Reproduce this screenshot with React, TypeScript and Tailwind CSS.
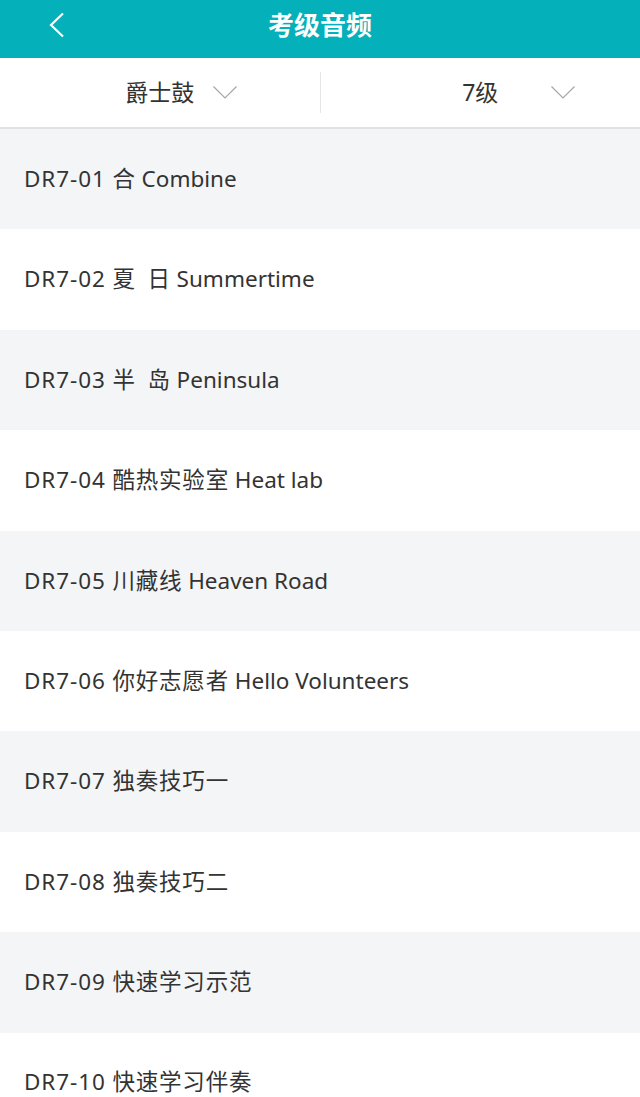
import React from 'react';

const tracks = [
  ['DR7-01', '合 Combine'],
  ['DR7-02', '夏  日 Summertime'],
  ['DR7-03', '半  岛 Peninsula'],
  ['DR7-04', '酷热实验室 Heat lab'],
  ['DR7-05', '川藏线 Heaven Road'],
  ['DR7-06', '你好志愿者 Hello Volunteers'],
  ['DR7-07', '独奏技巧一'],
  ['DR7-08', '独奏技巧二'],
  ['DR7-09', '快速学习示范'],
  ['DR7-10', '快速学习伴奏'],
];

const font = { fontFamily: '"Noto Sans", "Noto Sans CJK SC", sans-serif' };

function Chevron() {
  return (
    <svg width="24" height="13" viewBox="0 0 24 13" fill="none">
      <path d="M0.5 0.5 L12 12 L23.5 0.5" stroke="#a6a6a6" strokeWidth="1.2" />
    </svg>
  );
}

// chinese runs are set a little looser than the latin ones
function Title({ text }: { text: string }) {
  const parts = text.split(/([\u4e00-\u9fff]+)/).filter(Boolean);
  return (
    <>
      {parts.map((p, i) =>
        /[\u4e00-\u9fff]/.test(p) ? (
          <span key={i} className="tracking-[0.8px]">{p}</span>
        ) : (
          <span key={i}>{p}</span>
        )
      )}
    </>
  );
}

export default function App() {
  return (
    <div className="w-[640px] h-[1097px] overflow-hidden bg-white text-[#333]" style={font}>
      <header className="relative h-[58px] bg-[#04b0b9] flex items-center justify-center">
        <button className="absolute left-[49px] top-[12px]">
          <svg width="16" height="26" viewBox="0 0 16 26" fill="none">
            <path d="M14 1.5 L2 13 L14 24.5" stroke="white" strokeWidth="2.2" />
          </svg>
        </button>
        <h1 className="text-[26px] leading-none font-bold text-white -mt-[8px]">考级音频</h1>
      </header>

      <div className="h-[71px] flex border-b-2 border-[#e2e2e2]">
        <div className="relative flex-1 flex items-center justify-center">
          <span className="text-[23px] leading-none">爵士鼓</span>
          <span className="absolute left-[213px] top-[28px]"><Chevron /></span>
        </div>
        <div className="w-px my-[14px] bg-[#e6e6e6]" />
        <div className="relative flex-1 flex items-center justify-center">
          <span className="text-[23px] leading-none">7级</span>
          <span className="absolute left-[230px] top-[28px]"><Chevron /></span>
        </div>
      </div>

      <ul>
        {tracks.map(([code, title], i) => (
          <li
            key={code}
            className={`h-[100.4px] flex items-center pl-6 ${i % 2 === 0 ? 'bg-[#f4f5f7]' : 'bg-white'}`}
          >
            <span className="text-[22.5px] leading-none whitespace-pre">
              <span className="tracking-[0.9px]">{code} </span>
              <Title text={title} />
            </span>
          </li>
        ))}
      </ul>
    </div>
  );
}
